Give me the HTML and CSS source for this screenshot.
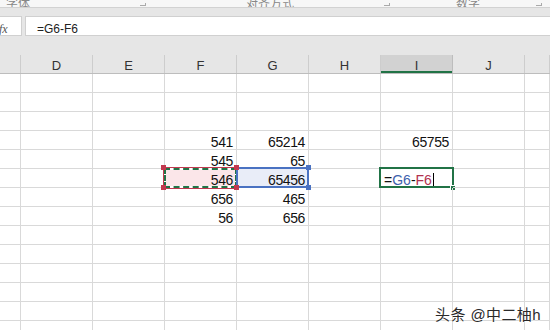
FILE: index.html
```html
<!DOCTYPE html>
<html lang="zh">
<head>
    <meta charset="UTF-8">
    <title>Sheet</title>
    <link rel="stylesheet" href="styles.css">
</head>
<body>
    <div class="ribbon">
        <div class="group g1"><span class="label">字体</span><span class="launch"></span></div>
        <div class="group g2"><span class="label">对齐方式</span><span class="launch"></span></div>
        <div class="group g3"><span class="label">数字</span><span class="launch"></span></div>
    </div>

    <div class="formula-bar">
        <div class="fx-box"><span class="fx">fx</span></div>
        <div class="formula-input">=G6-F6</div>
    </div>

    <div class="col-head">
        <div class="h"></div>
        <div class="h">D</div>
        <div class="h">E</div>
        <div class="h">F</div>
        <div class="h">G</div>
        <div class="h">H</div>
        <div class="h active">I</div>
        <div class="h">J</div>
        <div class="h"></div>
    </div>

    <div class="sheet">
        <div class="row"><div class="c"></div><div class="c"></div><div class="c"></div><div class="c"></div><div class="c"></div><div class="c"></div><div class="c"></div><div class="c"></div><div class="c"></div></div>
        <div class="row"><div class="c"></div><div class="c"></div><div class="c"></div><div class="c"></div><div class="c"></div><div class="c"></div><div class="c"></div><div class="c"></div><div class="c"></div></div>
        <div class="row"><div class="c"></div><div class="c"></div><div class="c"></div><div class="c"></div><div class="c"></div><div class="c"></div><div class="c"></div><div class="c"></div><div class="c"></div></div>
        <div class="row"><div class="c"></div><div class="c"></div><div class="c"></div><div class="c num">541</div><div class="c num">65214</div><div class="c"></div><div class="c num">65755</div><div class="c"></div><div class="c"></div></div>
        <div class="row"><div class="c"></div><div class="c"></div><div class="c"></div><div class="c num">545</div><div class="c num">65</div><div class="c"></div><div class="c"></div><div class="c"></div><div class="c"></div></div>
        <div class="row">
            <div class="c"></div><div class="c"></div><div class="c"></div>
            <div class="c num copy">546<span class="h-sq tl"></span><span class="h-sq tr"></span><span class="h-sq bl"></span><span class="h-sq br"></span></div>
            <div class="c num ref">65456<span class="h-sq tr"></span><span class="h-sq br"></span></div>
            <div class="c"></div>
            <div class="c edit">=<span class="ref-g">G6</span>-<span class="ref-f">F6</span><span class="caret"></span><span class="fill-handle"></span></div>
            <div class="c"></div><div class="c"></div>
        </div>
        <div class="row"><div class="c"></div><div class="c"></div><div class="c"></div><div class="c num">656</div><div class="c num">465</div><div class="c"></div><div class="c"></div><div class="c"></div><div class="c"></div></div>
        <div class="row"><div class="c"></div><div class="c"></div><div class="c"></div><div class="c num">56</div><div class="c num">656</div><div class="c"></div><div class="c"></div><div class="c"></div><div class="c"></div></div>
        <div class="row"><div class="c"></div><div class="c"></div><div class="c"></div><div class="c"></div><div class="c"></div><div class="c"></div><div class="c"></div><div class="c"></div><div class="c"></div></div>
        <div class="row"><div class="c"></div><div class="c"></div><div class="c"></div><div class="c"></div><div class="c"></div><div class="c"></div><div class="c"></div><div class="c"></div><div class="c"></div></div>
        <div class="row"><div class="c"></div><div class="c"></div><div class="c"></div><div class="c"></div><div class="c"></div><div class="c"></div><div class="c"></div><div class="c"></div><div class="c"></div></div>
        <div class="row"><div class="c"></div><div class="c"></div><div class="c"></div><div class="c"></div><div class="c"></div><div class="c"></div><div class="c"></div><div class="c"></div><div class="c"></div></div>
        <div class="row"><div class="c"></div><div class="c"></div><div class="c"></div><div class="c"></div><div class="c"></div><div class="c"></div><div class="c"></div><div class="c"></div><div class="c"></div></div>
        <div class="row"><div class="c"></div><div class="c"></div><div class="c"></div><div class="c"></div><div class="c"></div><div class="c"></div><div class="c"></div><div class="c"></div><div class="c"></div></div>
    </div>

    <div class="watermark">头条 @中二柚h</div>
</body>
</html>
```

FILE: styles.css
```css
* {
    margin: 0;
    padding: 0;
    box-sizing: border-box;
}

body {
    width: 550px;
    height: 330px;
    overflow: hidden;
    position: relative;
    background: #fff;
    color: #111;
    font-family: "Liberation Sans", "Noto Sans CJK SC", sans-serif;
}

/* ribbon bottom edge, mostly cut off */
.ribbon {
    display: flex;
    height: 8px;
    background: #f7f7f7;
    border-bottom: 1px solid #d2d2d2;
    overflow: hidden;
}

.group {
    display: flex;
    justify-content: space-between;
    align-items: flex-end;
    height: 7px;
}

.g1 { width: 150px; padding-left: 6px; padding-right: 4px; }
.g2 { width: 248px; padding-left: 96px; padding-right: 8px; }
.g3 { width: 152px; padding-left: 58px; padding-right: 8px; }

.label {
    font-size: 12px;
    line-height: 12px;
    margin-bottom: -3px;
    color: #888;
}

.launch {
    width: 6px;
    height: 3px;
    border-right: 1px solid #aaa;
    border-bottom: 1px solid #aaa;
    margin-bottom: 1px;
}

/* formula bar */
.formula-bar {
    display: flex;
    gap: 3px;
    height: 37px;
    padding: 8px 0 9px;
    background: #e6e6e6;
}

.fx-box {
    width: 22px;
    background: #fff;
    border: 1px solid #d0d0d0;
    border-left: none;
    overflow: hidden;
}

.fx {
    display: block;
    margin-left: -1px;
    font-family: "Liberation Serif", serif;
    font-style: italic;
    font-size: 12px;
    line-height: 24px;
    color: #555;
}

.formula-input {
    flex: 1;
    background: #fff;
    border: 1px solid #d0d0d0;
    border-right: none;
    padding-left: 11px;
    font-size: 12px;
    line-height: 24px;
    color: #222;
}

/* column headers */
.col-head {
    display: grid;
    grid-template-columns: 21px repeat(7, 72px) 1fr;
    height: 29px;
    padding-top: 10px;
    background: #e6e6e6;
    border-bottom: 1px solid #bdbdbd;
}

.h {
    border-right: 1px solid #cdcdcd;
    text-align: center;
    font-size: 13px;
    line-height: 15px;
    padding-top: 3px;
    color: #333;
}

.h.active {
    background: #d2d2d2;
    box-shadow: inset 0 -2px 0 #217346;
    border-right-color: #bdbdbd;
}

/* grid */
.row {
    display: grid;
    grid-template-columns: 21px repeat(7, 72px) 1fr;
}

.c {
    position: relative;
    height: 19px;
    border-right: 1px solid #d9d9d9;
    border-bottom: 1px solid #d9d9d9;
    font-size: 14px;
    line-height: 16px;
    padding-top: 3px;
    white-space: nowrap;
}

.num {
    text-align: right;
    padding-right: 3px;
    letter-spacing: -0.4px;
}

/* copied range (F6) */
.copy {
    background: #fbe6e9;
}

.copy::before {
    content: "";
    position: absolute;
    top: -2px;
    left: -2px;
    right: -2px;
    bottom: -2px;
    border: 1px solid #c2394f;
    box-shadow: inset 0 0 0 2px #fff;
}

.copy::after {
    content: "";
    position: absolute;
    top: -1px;
    left: -1px;
    right: -1px;
    bottom: -1px;
    border: 2px dashed #217346;
}

.h-sq {
    position: absolute;
    width: 5px;
    height: 5px;
    background: #c2394f;
    z-index: 2;
}

.h-sq.tl { left: -4px; top: -4px; }
.h-sq.tr { right: -3px; top: -4px; }
.h-sq.bl { left: -4px; bottom: -3px; }
.h-sq.br { right: -3px; bottom: -3px; }

/* referenced range (G6) */
.ref {
    background: #e9edf8;
}

.ref::before {
    content: "";
    position: absolute;
    top: -2px;
    left: -1px;
    right: -1px;
    bottom: -1px;
    border: 2px solid #4a72c2;
}

.ref .h-sq {
    background: #4a72c2;
}

/* editing cell (I6) */
.edit {
    padding-left: 3px;
}

.edit::before {
    content: "";
    position: absolute;
    top: -2px;
    left: -2px;
    right: -2px;
    bottom: -1px;
    border: 2px solid #217346;
}

.ref-g { color: #3d62ad; }
.ref-f { color: #b2324f; }

.caret {
    display: inline-block;
    width: 1px;
    height: 14px;
    background: #000;
    margin-left: 1px;
    vertical-align: -2px;
}

.fill-handle {
    position: absolute;
    right: -4px;
    bottom: -4px;
    width: 6px;
    height: 6px;
    background: #217346;
    border: 1px solid #fff;
}

.watermark {
    position: absolute;
    right: 9px;
    top: 303px;
    font-size: 15px;
    letter-spacing: 0.4px;
    color: #2a2a2a;
    text-shadow: 0 0 2px #fff, 0 0 2px #fff;
}
```
